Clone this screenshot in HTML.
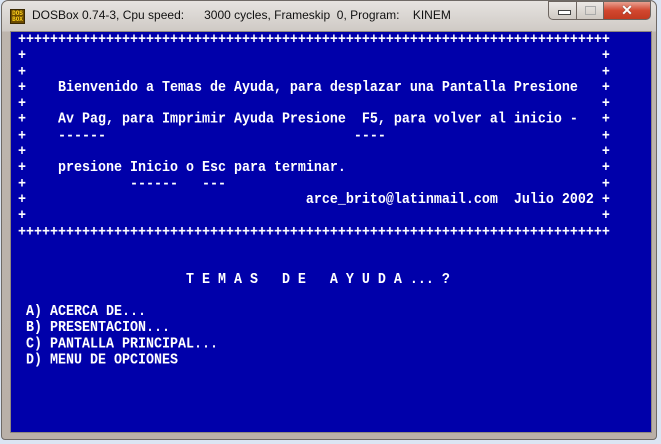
<!DOCTYPE html>
<html><head><meta charset="utf-8"><style>
html,body{margin:0;padding:0;width:661px;height:444px;overflow:hidden;background:#dbe5f3;}
.win{position:absolute;left:1px;top:0;width:656px;height:440px;border:1px solid #6f6a66;border-radius:7px 7px 4px 4px;background:linear-gradient(#e6e3e0,#cfcac5 30px,#bdb5ad 31px,#b9b0a8);box-sizing:border-box;}
.title{position:absolute;left:32px;top:8px;font:12px "Liberation Sans",sans-serif;color:#111;white-space:pre;}
.icon{position:absolute;left:10px;top:9px;width:15px;height:15px;background:#6b4a00;border:1px solid #3a2800;box-sizing:border-box;font:bold 6px/6px "Liberation Mono",monospace;color:#ffd21a;text-align:center;padding-top:1px;}
.btn{position:absolute;top:1px;height:19px;box-sizing:border-box;border:1px solid #6d6560;}
.screen{position:absolute;left:10px;top:31px;width:642px;height:402px;background:#0000aa;border:1px solid #8f8880;box-sizing:border-box;}
pre{position:absolute;left:10px;top:33px;margin:0;font:bold 13.33px/16px "Liberation Mono",monospace;color:#fff;transform:scaleY(1.12);transform-origin:0 0;}
</style></head><body>
<div class="win"></div>
<div class="icon">DOS<br>BOX</div>
<div class="title">DOSBox 0.74-3, Cpu speed:      3000 cycles, Frameskip  0, Program:    KINEM</div>
<div class="btn" style="left:548px;width:29px;border-radius:0 0 0 5px;background:linear-gradient(#ece9e6,#cfc9c3);"><div style="position:absolute;left:9px;top:8px;width:11px;height:3px;background:#fff;border:1px solid #444;"></div></div>
<div class="btn" style="left:576px;width:28px;background:linear-gradient(#ece9e6,#cfc9c3);"><div style="position:absolute;left:8px;top:4px;width:9px;height:7px;border:1px solid #aaa;"></div></div>
<div class="btn" style="left:603px;width:48px;border-radius:0 0 5px 0;background:linear-gradient(#e8a090,#d2472f 50%,#c23a20);color:#fff;font:bold 14px/17px 'Liberation Sans',sans-serif;text-align:center;text-shadow:0 0 1px #333;">✕</div>
<div class="screen"></div>
<pre style="line-height:14.29px"> ++++++++++++++++++++++++++++++++++++++++++++++++++++++++++++++++++++++++++
 +                                                                        +
 +                                                                        +
 +    Bienvenido a Temas de Ayuda, para desplazar una Pantalla Presione   +
 +                                                                        +
 +    Av Pag, para Imprimir Ayuda Presione  F5, para volver al inicio -   +
 +    ------                               ----                           +
 +                                                                        +
 +    presione Inicio o Esc para terminar.                                +
 +             ------   ---                                               +
 +                                   arce_brito@latinmail.com  Julio 2002 +
 +                                                                        +
 ++++++++++++++++++++++++++++++++++++++++++++++++++++++++++++++++++++++++++


                      T E M A S   D E   A Y U D A ... ?

  A) ACERCA DE...
  B) PRESENTACION...
  C) PANTALLA PRINCIPAL...
  D) MENU DE OPCIONES</pre>
</body></html>
